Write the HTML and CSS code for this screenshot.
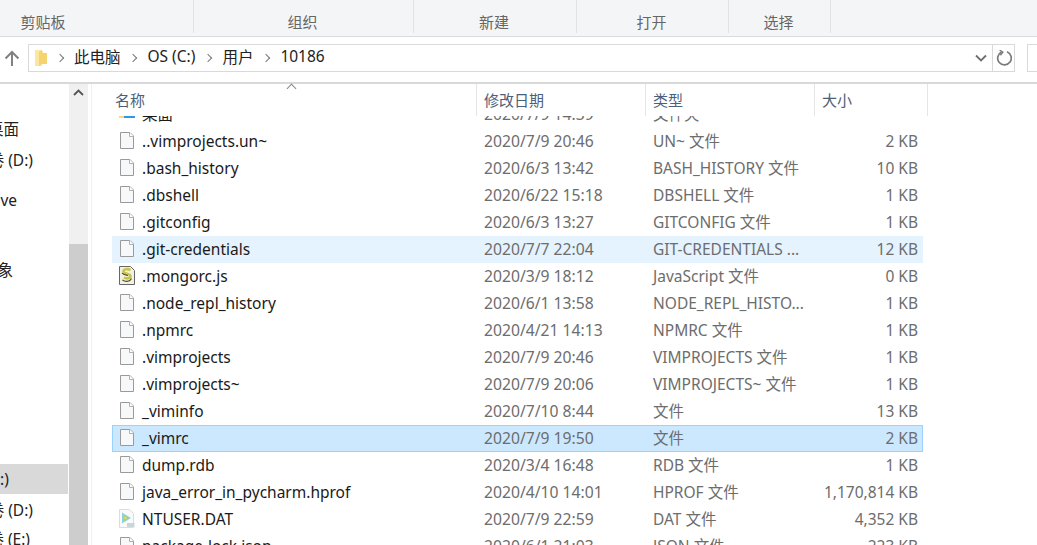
FILE: index.html
```html
<!DOCTYPE html>
<html lang="zh-CN">
<head>
  <meta charset="UTF-8" />
  <title>10186</title>
  <link rel="stylesheet" href="styles.css">
</head>
<body>
  <svg class="defs" width="0" height="0">
    <symbol id="doc" viewBox="0 0 16 19">
      <path d="M1.5 1.5h9.5l3.5 3.5v12.500h-13z" fill="#f7f8f9" stroke="#9a9a9a"/>
      <path d="M10.5 1.5v4h4" fill="#fff" stroke="#b0b0b0"/>
    </symbol>
  </svg>

  <div class="ribbon">
    <div class="group g1">剪贴板</div>
    <div class="group g2">组织</div>
    <div class="group g3">新建</div>
    <div class="group g4">打开</div>
    <div class="group g5">选择</div>
  </div>

  <div class="addr">
    <svg class="up" width="16" height="16" viewBox="0 0 16 16">
      <path d="M8 16V2M1.500 8.500L8 2l6.500 6.500" fill="none" stroke="#808080" stroke-width="2"/>
    </svg>
    <div class="path">
      <svg class="folder" width="13" height="18" viewBox="0 0 13 18">
        <path d="M0 1h7v16H0z" fill="#fbe6a2"/>
        <path d="M7 1l1 3h4v11H7l-3 2V3z" fill="#f5d36f"/>
      </svg>
      <span class="sep"></span><span>此电脑</span>
      <span class="sep"></span><span>OS (C:)</span>
      <span class="sep"></span><span>用户</span>
      <span class="sep"></span><span>10186</span>
      <svg class="drop" width="12" height="8" viewBox="0 0 12 8">
        <path d="M1 1.500l5 5 5-5" fill="none" stroke="#6f6f6f" stroke-width="1.800"/>
      </svg>
      <div class="refresh">
        <svg width="16" height="16" viewBox="0 0 16 16">
          <path d="M5.500 2A6.800 6.800 0 1 0 11 1.800" fill="none" stroke="#7a7a7a" stroke-width="1.700"/>
          <path d="M3.600 0L6.800 2.200L4.400 5.200" fill="none" stroke="#7a7a7a" stroke-width="1.400"/>
        </svg>
      </div>
    </div>
    <div class="search"></div>
  </div>

  <div class="main">
    <div class="nav">
      <div class="tree">
        <div class="node n1">桌面</div>
        <div class="node n2">卷 (D:)</div>
        <div class="node n3">ve</div>
        <div class="node n4">象</div>
        <div class="node n5 active">:)</div>
        <div class="node n6">卷 (D:)</div>
        <div class="node n7">卷 (E:)</div>
      </div>
      <div class="scroll">
        <svg class="scroll-up" width="11" height="7" viewBox="0 0 11 7">
          <path d="M1 6l4.500-4.500L10 6" fill="none" stroke="#555" stroke-width="1.800"/>
        </svg>
        <div class="thumb"></div>
      </div>
    </div>

    <div class="files">
      <div class="head">
        <div class="hcell c-name">名称<span class="caret"></span></div>
        <div class="hcell c-date">修改日期</div>
        <div class="hcell c-type">类型</div>
        <div class="hcell c-size">大小</div>
      </div>
      <div class="list">
        <div class="rows">
          <div class="row">
            <span class="c-name"><svg class="ico" width="16" height="19" viewBox="0 0 16 19"><path d="M0 6h3l1 2h12v6H0z" fill="#f6d97c"/><path d="M5 8h11v6H5z" fill="#2b9be8"/></svg><b>桌面</b></span>
            <span class="c-date">2020/7/9 14:39</span><span class="c-type">文件夹</span><span class="c-size"></span>
          </div>
          <div class="row">
            <span class="c-name"><svg class="ico"><use href="#doc"/></svg><b>..vimprojects.un~</b></span>
            <span class="c-date">2020/7/9 20:46</span><span class="c-type">UN~ 文件</span><span class="c-size">2 KB</span>
          </div>
          <div class="row">
            <span class="c-name"><svg class="ico"><use href="#doc"/></svg><b>.bash_history</b></span>
            <span class="c-date">2020/6/3 13:42</span><span class="c-type">BASH_HISTORY 文件</span><span class="c-size">10 KB</span>
          </div>
          <div class="row">
            <span class="c-name"><svg class="ico"><use href="#doc"/></svg><b>.dbshell</b></span>
            <span class="c-date">2020/6/22 15:18</span><span class="c-type">DBSHELL 文件</span><span class="c-size">1 KB</span>
          </div>
          <div class="row">
            <span class="c-name"><svg class="ico"><use href="#doc"/></svg><b>.gitconfig</b></span>
            <span class="c-date">2020/6/3 13:27</span><span class="c-type">GITCONFIG 文件</span><span class="c-size">1 KB</span>
          </div>
          <div class="row hover">
            <span class="c-name"><svg class="ico"><use href="#doc"/></svg><b>.git-credentials</b></span>
            <span class="c-date">2020/7/7 22:04</span><span class="c-type">GIT-CREDENTIALS ...</span><span class="c-size">12 KB</span>
          </div>
          <div class="row">
            <span class="c-name"><svg class="ico" width="16" height="19" viewBox="0 0 16 19"><path d="M0.500 0.500h11l4 4v14h-15z" fill="#f1f1e6" stroke="#666"/><path d="M11.500 4c-3-1.500-7-1-7 1.500s7 2 7 4.500-4 3-6.500 1.500" fill="none" stroke="#c9c445" stroke-width="2.600"/><path d="M3.500 14c2.500 2 7.500 2 9-1.500M3 7c1 1.500 4 2 6 2.500" fill="none" stroke="#55551f" stroke-width="1.200"/></svg><b>.mongorc.js</b></span>
            <span class="c-date">2020/3/9 18:12</span><span class="c-type">JavaScript 文件</span><span class="c-size">0 KB</span>
          </div>
          <div class="row">
            <span class="c-name"><svg class="ico"><use href="#doc"/></svg><b>.node_repl_history</b></span>
            <span class="c-date">2020/6/1 13:58</span><span class="c-type">NODE_REPL_HISTO...</span><span class="c-size">1 KB</span>
          </div>
          <div class="row">
            <span class="c-name"><svg class="ico"><use href="#doc"/></svg><b>.npmrc</b></span>
            <span class="c-date">2020/4/21 14:13</span><span class="c-type">NPMRC 文件</span><span class="c-size">1 KB</span>
          </div>
          <div class="row">
            <span class="c-name"><svg class="ico"><use href="#doc"/></svg><b>.vimprojects</b></span>
            <span class="c-date">2020/7/9 20:46</span><span class="c-type">VIMPROJECTS 文件</span><span class="c-size">1 KB</span>
          </div>
          <div class="row">
            <span class="c-name"><svg class="ico"><use href="#doc"/></svg><b>.vimprojects~</b></span>
            <span class="c-date">2020/7/9 20:06</span><span class="c-type">VIMPROJECTS~ 文件</span><span class="c-size">1 KB</span>
          </div>
          <div class="row">
            <span class="c-name"><svg class="ico"><use href="#doc"/></svg><b>_viminfo</b></span>
            <span class="c-date">2020/7/10 8:44</span><span class="c-type">文件</span><span class="c-size">13 KB</span>
          </div>
          <div class="row selected">
            <span class="c-name"><svg class="ico"><use href="#doc"/></svg><b>_vimrc</b></span>
            <span class="c-date">2020/7/9 19:50</span><span class="c-type">文件</span><span class="c-size">2 KB</span>
          </div>
          <div class="row">
            <span class="c-name"><svg class="ico"><use href="#doc"/></svg><b>dump.rdb</b></span>
            <span class="c-date">2020/3/4 16:48</span><span class="c-type">RDB 文件</span><span class="c-size">1 KB</span>
          </div>
          <div class="row">
            <span class="c-name"><svg class="ico"><use href="#doc"/></svg><b>java_error_in_pycharm.hprof</b></span>
            <span class="c-date">2020/4/10 14:01</span><span class="c-type">HPROF 文件</span><span class="c-size">1,170,814 KB</span>
          </div>
          <div class="row">
            <span class="c-name"><svg class="ico" width="16" height="19" viewBox="0 0 16 19"><path d="M0.500 0.500h10l4 4v14h-14z" fill="#fafafa" stroke="#dcdcdc"/><path d="M3 3.500l9 5.500-9 5.500z" fill="#8fd0e8"/><path d="M4.500 5.500l5.500 3.500-5.500 3.500z" fill="#a5d477"/><path d="M5.500 7.500l2.500 1.500-2.500 1.500z" fill="#efdc6a"/><path d="M8 14h7.500v4H8z" fill="#c9d6dc"/></svg><b>NTUSER.DAT</b></span>
            <span class="c-date">2020/7/9 22:59</span><span class="c-type">DAT 文件</span><span class="c-size">4,352 KB</span>
          </div>
          <div class="row">
            <span class="c-name"><svg class="ico"><use href="#doc"/></svg><b>package-lock.json</b></span>
            <span class="c-date">2020/6/1 21:03</span><span class="c-type">JSON 文件</span><span class="c-size">223 KB</span>
          </div>
        </div>
      </div>
    </div>
  </div>
</body>
</html>
```

FILE: styles.css
```css
* {
  box-sizing: border-box;
}
html, body {
  margin: 0;
  height: 545px;
  overflow: hidden;
}
body {
  width: 1037px;
  background: #fff;
  font-family: "Noto Sans", "Noto Sans CJK SC", sans-serif;
  font-size: 15.5px;
  color: #1a1a1a;
}
.defs {
  position: absolute;
}

/* ribbon */
.ribbon {
  display: flex;
  height: 37px;
  background: #f4f5f7;
  border-bottom: 1px solid #dadbdc;
  color: #666;
  font-size: 15px;
}
.group {
  height: 33px;
  padding: 12px 2px 0 0;
  line-height: 21px;
  text-align: center;
  border-right: 1px solid #e1e2e4;
}
.g1 { width: 194px; padding-right: 107px; }
.g2 { width: 220px; }
.g3 { width: 163px; }
.g4 { width: 152px; }
.g5 { width: 102px; }

/* address bar */
.addr {
  display: flex;
  align-items: center;
  height: 47px;
  padding-bottom: 3px;
  border-bottom: 2px solid #d9d9d9;
}
.up {
  margin-left: 4px;
  margin-right: 8px;
}
.path {
  display: flex;
  align-items: center;
  width: 990px;
  height: 28px;
  padding-left: 6px;
  border: 1px solid #d9d9d9;
  color: #222;
}
.path > span {
  position: relative;
  top: -2px;
}
.folder {
  margin-right: -1px;
}
.path > .sep {
  top: 0;
  width: 6px;
  height: 6px;
  margin: 0 11px 0 10px;
  border-top: 1.500px solid #777;
  border-right: 1.500px solid #777;
  transform: rotate(45deg);
}
.drop {
  margin-left: auto;
  margin-right: 5px;
}
.refresh {
  display: flex;
  align-items: center;
  justify-content: center;
  width: 22px;
  height: 100%;
  border-left: 1px solid #d9d9d9;
}
.search {
  width: 10px;
  height: 28px;
  margin-left: 12px;
  border: 1px solid #d9d9d9;
  border-right: none;
}

/* left tree */
.main {
  display: flex;
  height: 461px;
}
.nav {
  display: flex;
  width: 92px;
  flex: none;
  border-right: 1px solid #f0f0f0;
}
.tree {
  width: 69px;
  overflow: hidden;
  color: #222;
  white-space: nowrap;
}
.node {
  display: flex;
  justify-content: flex-end;
  height: 30px;
  line-height: 30px;
}
.n1 { width: 19px; margin-top: 30px; }
.n2 { width: 33px; margin-top: 1px; }
.n3 { width: 17px; margin-top: 10px; }
.n4 { width: 13px; margin-top: 40px; }
.n5 { width: 68px; justify-content: flex-start; margin-top: 179px; background: #d9d9d9; }
.n6 { width: 33px; margin-top: 1px; }
.n7 { width: 30px; margin-top: -1px; }
.scroll {
  width: 19px;
  background: #f0f0f0;
}
.scroll-up {
  display: block;
  margin: 5px auto 0;
}
.thumb {
  height: 301px;
  margin-top: 148px;
  background: #cdcdcd;
}

/* file list */
.files {
  flex: 1;
  min-width: 0;
  padding-left: 20px;
}
.head {
  position: relative;
  display: flex;
  height: 32px;
  color: #4c607a;
  font-size: 15px;
}
.hcell {
  padding-top: 5px;
  line-height: 22px;
  border-right: 1px solid #e5e5e5;
}
.caret {
  position: absolute;
  left: 176px;
  top: 1px;
  width: 7px;
  height: 7px;
  border-top: 1px solid #888;
  border-left: 1px solid #888;
  transform: rotate(45deg);
}
.c-name { width: 365px; padding-left: 3px; }
.c-date { width: 169px; padding-left: 7px; }
.c-type { width: 169px; padding-left: 7px; }
.c-size { width: 113px; padding-left: 7px; }
.list {
  width: 811px;
  height: 429px;
  overflow: hidden;
}
.rows {
  margin-top: -15px;
}
.row {
  display: flex;
  align-items: center;
  height: 27px;
  padding-bottom: 2px;
  color: #6d6d6d;
  white-space: nowrap;
}
.row .c-name {
  display: flex;
  align-items: center;
  padding-left: 7px;
  color: #1a1a1a;
}
.row .c-name b {
  font-weight: 400;
  margin-left: 7px;
}
.row .c-date {
  font-size: 15.7px;
}
.row .c-type {
  width: 167px;
}
.row .c-size {
  width: 110px;
  padding: 0 5px 0 0;
  text-align: right;
}
.ico {
  width: 16px;
  height: 19px;
  flex: none;
}
.hover {
  background: #e5f3ff;
}
.selected {
  background: #cce8ff;
  box-shadow: inset 0 0 0 1px #99d1ff;
}
```
